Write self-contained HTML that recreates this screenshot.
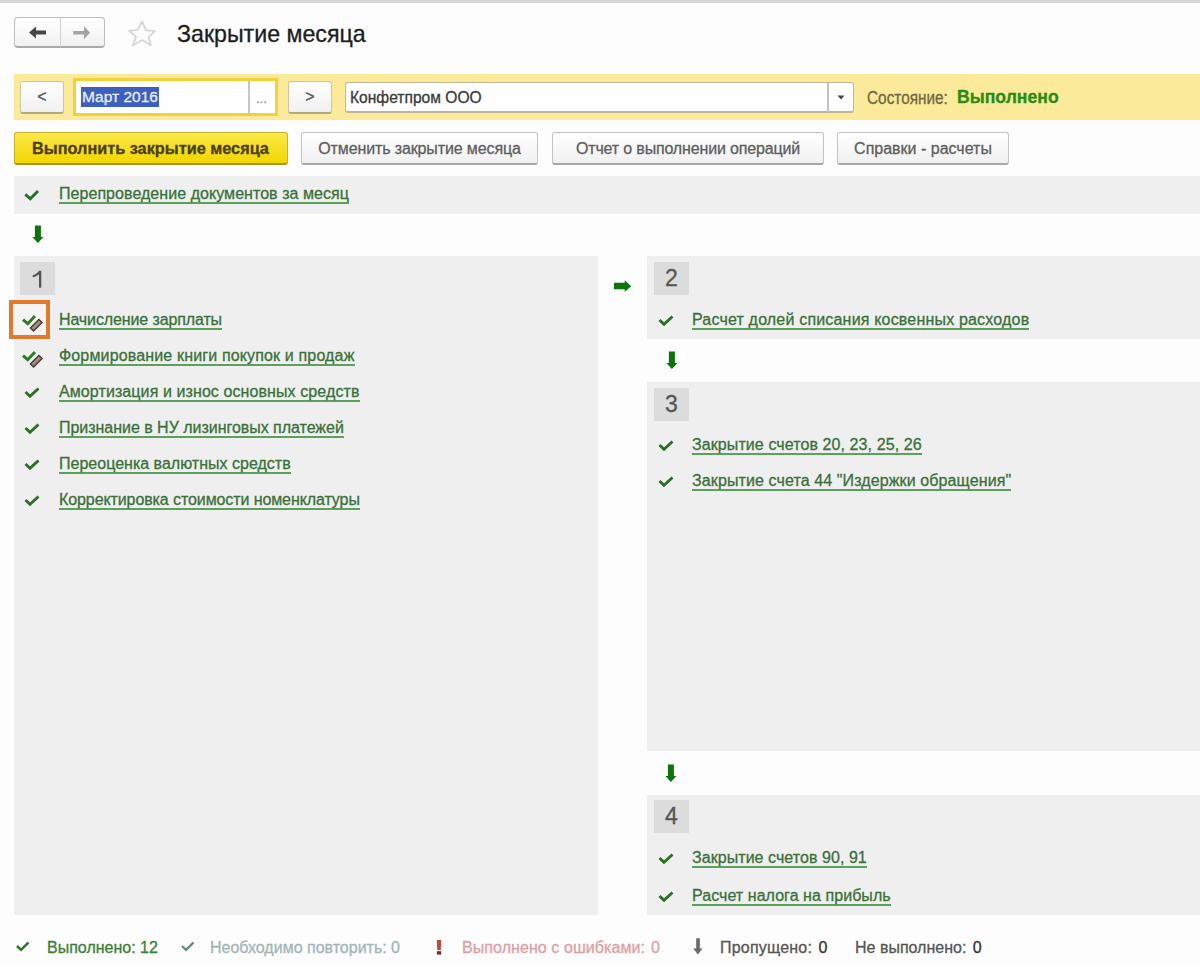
<!DOCTYPE html>
<html><head><meta charset="utf-8">
<style>
*{box-sizing:border-box;margin:0;padding:0}
html,body{width:1200px;height:965px;overflow:hidden;background:#fdfdfd;font-family:"Liberation Sans",sans-serif;position:relative}
body div{-webkit-text-stroke:0.3px currentColor}
.a{position:absolute}
.topline{left:0;top:0;width:1200px;height:3px;background:#d6d6d6}
.navgrp{left:14px;top:17px;width:91px;height:31px;border:1px solid #bdbdbd;border-bottom:2px solid #a9a9a9;border-radius:4px;background:linear-gradient(#ffffff,#f1f1f1)}
.navdiv{left:60px;top:18px;width:1px;height:29px;background:#d0d0d0}
.title{left:177px;top:20px;font-size:23.2px;-webkit-text-stroke:0.3px #1c1c1c;color:#1c1c1c;line-height:28px;white-space:nowrap}
.ypanel{left:14px;top:74px;width:1186px;height:46px;background:#faea9a}
.btn{border:1px solid #c3c3c3;border-bottom:2px solid #a8a8a8;border-radius:3px;background:linear-gradient(#ffffff,#f0f0f0);color:#5e5e5e;font-size:16px;text-align:center;white-space:nowrap}
.sbtn{border-color:#cfc6a0;border-bottom-color:#b2a886}
.field{background:#fff;border:1px solid #bfb897;border-bottom-width:2px;border-radius:3px}
.gp{background:#efefef}
.badge{width:35px;height:33px;background:#dcdcdc;color:#555;font-size:23px;text-align:center;line-height:33px}
.lnk{font-size:16px;color:#3b703b;white-space:nowrap;line-height:18px;height:19px;border-bottom:2px solid #5d9f5d;padding-bottom:0}
.st{font-size:16px;white-space:nowrap;line-height:18px}
svg{position:absolute;overflow:visible}
</style></head><body>
<div class="a topline"></div>

<!-- nav -->
<div class="a navgrp"></div>
<div class="a navdiv"></div>
<svg style="left:28px;top:25px" width="20" height="14" viewBox="0 0 20 14"><path d="M1 7.5 L8 1.5 L8 5.5 L18 5.5 L18 9.5 L8 9.5 L8 13.5 Z" fill="#474747"/></svg>
<svg style="left:72px;top:25px" width="20" height="14" viewBox="0 0 20 14"><path d="M18 7.7 L12 1.3 L12 6 L1.3 6 L1.3 9.4 L12 9.4 L12 14.2 Z" fill="#a3a3a3"/></svg>
<svg style="left:128px;top:20px" width="28" height="28" viewBox="0 0 28 28"><path d="M14.2 1.5 L17.9 10.3 L27 11 L20.6 17.4 L22.9 25.2 L14.2 19.9 L4.9 25.6 L8 16.6 L1 10.9 L9.6 9.9 Z" fill="none" stroke="#d4d4d4" stroke-width="1.7" stroke-linejoin="round"/></svg>
<div class="a title">Закрытие месяца</div>

<!-- yellow panel -->
<div class="a ypanel"></div>
<div class="a btn sbtn" style="left:20px;top:81px;width:44px;height:33px;line-height:30px;font-size:16px;color:#555">&lt;</div>
<div class="a" style="left:73px;top:78px;width:205px;height:38px;border:3px solid #f1d337;background:#fff"></div>
<div class="a" style="left:248px;top:81px;width:2px;height:32px;background:#c6c6c6"></div>
<div class="a" style="left:81px;top:87px;width:78px;height:20px;background:#3d5fbf"></div>
<div class="a st" style="left:82px;top:88px;color:#e8eefc;font-size:15.5px">Март 2016</div>
<div class="a st" style="left:256px;top:90px;color:#999;font-size:13px">...</div>
<div class="a btn sbtn" style="left:288px;top:81px;width:44px;height:33px;line-height:30px;color:#555">&gt;</div>
<div class="a field" style="left:345px;top:82px;width:509px;height:31px"></div>
<div class="a" style="left:827px;top:83px;width:2px;height:29px;background:#c2c2c2"></div>
<svg style="left:837px;top:95px" width="8" height="5" viewBox="0 0 8 5"><path d="M0.5 0.5 L7.5 0.5 L4 4.5 Z" fill="#444"/></svg>
<div class="a st" style="left:350px;top:89px;color:#3a3a3a;font-size:15.6px">Конфетпром ООО</div>
<div class="a st" style="left:867px;top:89px;color:#6f6840;font-size:18.5px;transform:scaleX(0.83);transform-origin:0 0">Состояние:</div>
<div class="a st" style="left:957px;top:88px;color:#2a8c12;font-size:17.6px;font-weight:bold">Выполнено</div>

<!-- buttons -->
<div class="a" style="left:14px;top:132px;width:274px;height:33px;border:1px solid #c9b22a;border-bottom:2px solid #a99420;border-radius:3px;background:linear-gradient(#fbe84a,#f3d600);"></div>
<div class="a st" style="left:32px;top:139px;color:#4a400c;font-weight:bold;font-size:16.3px">Выполнить закрытие месяца</div>
<div class="a btn" style="left:301px;top:132px;width:237px;height:33px;line-height:31px;letter-spacing:-0.12px">Отменить закрытие месяца</div>
<div class="a btn" style="left:552px;top:132px;width:272px;height:33px;line-height:31px;letter-spacing:-0.16px">Отчет о выполнении операций</div>
<div class="a btn" style="left:837px;top:132px;width:172px;height:33px;line-height:31px">Справки - расчеты</div>

<!-- row 1 -->
<div class="a gp" style="left:14px;top:176px;width:1186px;height:38px"></div>
<svg style="left:24px;top:187px" width="16" height="14" viewBox="0 0 16 14"><path d="M1.3 7.3 L6.3 11.8 L14 3.9" fill="none" stroke="#2c6e26" stroke-width="2.9"/></svg>
<div class="a lnk" style="left:59px;top:185px;letter-spacing:0.051px">Перепроведение документов за месяц</div>

<svg style="left:32px;top:225px" width="12" height="19" viewBox="0 0 12 19"><path d="M2.9 0.6 L8.9 0.6 L8.9 11.9 L11.4 11.9 L5.9 18 L0.4 11.9 L2.9 11.9 Z" fill="#0b740c"/></svg>

<!-- panel 1 -->
<div class="a gp" style="left:14px;top:256px;width:584px;height:659px"></div>
<div class="a badge" style="left:20px;top:262px"></div>
<svg style="left:32px;top:270px" width="10" height="18" viewBox="0 0 10 18"><path d="M7 0.7 L9.3 0.7 L9.3 17.8 L7 17.8 L7 4.2 C5.6 5.6 3.6 6.7 0.7 7.3 L0.7 5.2 C3.6 4.4 5.6 2.7 7 0.7 Z" fill="#555"/></svg>
<div class="a" style="left:9px;top:300px;width:41px;height:39px;border:4px solid #e27a2e;background:#f4f4f5"></div>

<!-- panel 2 -->
<svg style="left:614px;top:280px" width="18" height="12" viewBox="0 0 18 12"><path d="M0 2.7 L10.7 2.7 L10.7 0.3 L17.2 6.3 L10.7 11.7 L10.7 9.2 L0 9.2 Z" fill="#0b740c"/></svg>
<div class="a gp" style="left:647px;top:256px;width:553px;height:83px"></div>
<div class="a badge" style="left:654px;top:262px">2</div>

<svg style="left:666px;top:351px" width="12" height="19" viewBox="0 0 12 19"><path d="M2.9 0.6 L8.9 0.6 L8.9 11.9 L11.4 11.9 L5.9 18 L0.4 11.9 L2.9 11.9 Z" fill="#0b740c"/></svg>

<!-- panel 3 -->
<div class="a gp" style="left:647px;top:382px;width:553px;height:369px"></div>
<div class="a badge" style="left:654px;top:388px">3</div>

<svg style="left:665px;top:764px" width="12" height="19" viewBox="0 0 12 19"><path d="M2.9 0.6 L8.9 0.6 L8.9 11.9 L11.4 11.9 L5.9 18 L0.4 11.9 L2.9 11.9 Z" fill="#0b740c"/></svg>

<!-- panel 4 -->
<div class="a gp" style="left:647px;top:795px;width:553px;height:120px"></div>
<div class="a badge" style="left:654px;top:800px">4</div>

<!-- links placeholder -->
<svg style="left:20px;top:312px" width="24" height="21" viewBox="0 0 24 21"><defs><linearGradient id="pg" x1="1" y1="0" x2="0" y2="1"><stop offset="0" stop-color="#5a4638"/><stop offset="1" stop-color="#cfc2b8"/></linearGradient></defs><path d="M3 7.7 L7.7 11.7 L15 4" fill="none" stroke="#2c7d24" stroke-width="3"/><path d="M22.1 10.6 L18.9 7.4 L10.4 15.9 L13.6 19.1 Z" fill="#9c8c82" stroke="#4a3a30" stroke-width="1.4"/></svg>
<div class="a lnk" style="left:59px;top:311px;letter-spacing:-0.118px">Начисление зарплаты</div>
<svg style="left:20px;top:348px" width="24" height="21" viewBox="0 0 24 21"><defs><linearGradient id="pg" x1="1" y1="0" x2="0" y2="1"><stop offset="0" stop-color="#5a4638"/><stop offset="1" stop-color="#cfc2b8"/></linearGradient></defs><path d="M3 7.7 L7.7 11.7 L15 4" fill="none" stroke="#2c7d24" stroke-width="3"/><path d="M22.1 10.6 L18.9 7.4 L10.4 15.9 L13.6 19.1 Z" fill="#9c8c82" stroke="#4a3a30" stroke-width="1.4"/></svg>
<div class="a lnk" style="left:59px;top:347px;letter-spacing:0.151px">Формирование книги покупок и продаж</div>
<svg style="left:24px;top:387px" width="16" height="12" viewBox="0 0 16 12"><path d="M1.5 5 L6 9.3 L14.5 1.5" fill="none" stroke="#2c6e26" stroke-width="2.9"/></svg>
<div class="a lnk" style="left:59px;top:383px;letter-spacing:0.092px">Амортизация и износ основных средств</div>
<svg style="left:24px;top:423px" width="16" height="12" viewBox="0 0 16 12"><path d="M1.5 5 L6 9.3 L14.5 1.5" fill="none" stroke="#2c6e26" stroke-width="2.9"/></svg>
<div class="a lnk" style="left:59px;top:419px;letter-spacing:-0.029px">Признание в НУ лизинговых платежей</div>
<svg style="left:24px;top:459px" width="16" height="12" viewBox="0 0 16 12"><path d="M1.5 5 L6 9.3 L14.5 1.5" fill="none" stroke="#2c6e26" stroke-width="2.9"/></svg>
<div class="a lnk" style="left:59px;top:455px;letter-spacing:0.010px">Переоценка валютных средств</div>
<svg style="left:24px;top:495px" width="16" height="12" viewBox="0 0 16 12"><path d="M1.5 5 L6 9.3 L14.5 1.5" fill="none" stroke="#2c6e26" stroke-width="2.9"/></svg>
<div class="a lnk" style="left:59px;top:491px;letter-spacing:-0.095px">Корректировка стоимости номенклатуры</div>
<svg style="left:658px;top:315px" width="16" height="12" viewBox="0 0 16 12"><path d="M1.5 5 L6 9.3 L14.5 1.5" fill="none" stroke="#2c6e26" stroke-width="2.9"/></svg>
<div class="a lnk" style="left:692px;top:311px;letter-spacing:0.182px">Расчет долей списания косвенных расходов</div>
<svg style="left:658px;top:440px" width="16" height="12" viewBox="0 0 16 12"><path d="M1.5 5 L6 9.3 L14.5 1.5" fill="none" stroke="#2c6e26" stroke-width="2.9"/></svg>
<div class="a lnk" style="left:692px;top:436px;letter-spacing:0.092px">Закрытие счетов 20, 23, 25, 26</div>
<svg style="left:658px;top:476px" width="16" height="12" viewBox="0 0 16 12"><path d="M1.5 5 L6 9.3 L14.5 1.5" fill="none" stroke="#2c6e26" stroke-width="2.9"/></svg>
<div class="a lnk" style="left:692px;top:472px;letter-spacing:0.111px">Закрытие счета 44 &quot;Издержки обращения&quot;</div>
<svg style="left:658px;top:853px" width="16" height="12" viewBox="0 0 16 12"><path d="M1.5 5 L6 9.3 L14.5 1.5" fill="none" stroke="#2c6e26" stroke-width="2.9"/></svg>
<div class="a lnk" style="left:692px;top:849px;letter-spacing:0.056px">Закрытие счетов 90, 91</div>
<svg style="left:658px;top:891px" width="16" height="12" viewBox="0 0 16 12"><path d="M1.5 5 L6 9.3 L14.5 1.5" fill="none" stroke="#2c6e26" stroke-width="2.9"/></svg>
<div class="a lnk" style="left:692px;top:887px;letter-spacing:0.057px">Расчет налога на прибыль</div>

<!-- status bar -->
<svg style="left:16px;top:941px" width="14" height="11" viewBox="0 0 14 11"><path d="M1 5 L5 8.8 L12.5 1.5" fill="none" stroke="#2f7a2a" stroke-width="2.5"/></svg>
<div class="a st" style="left:47px;top:939px;color:#3a7f3a">Выполнено: 12</div>
<svg style="left:181px;top:941px" width="14" height="11" viewBox="0 0 14 11"><path d="M1 5 L5 8.8 L12.5 1.5" fill="none" stroke="#5f8a80" stroke-width="2.3"/></svg>
<div class="a st" style="left:210px;top:939px;color:#a2b6b6">Необходимо повторить: 0</div>
<svg style="left:436px;top:940px" width="6" height="15" viewBox="0 0 6 15"><path d="M0.8 0 L5.2 0 L4.8 10 L1.2 10 Z" fill="#c04a35"/><path d="M0.8 11.2 L5.2 11.2 L5.2 14.6 L0.8 14.6 Z" fill="#7a2a2a"/></svg>
<div class="a st" style="left:462px;top:939px;color:#dfa0a3;letter-spacing:0.07px">Выполнено с ошибками:<span style="margin-left:1.5px"> 0</span></div>
<svg style="left:693px;top:938px" width="10" height="17" viewBox="0 0 10 17"><path d="M3.2 0.3 L6.8 0.3 L6.8 10.5 L9.5 10.5 L4.9 16.5 L0.2 10.5 L3.2 10.5 Z" fill="#6a6a6a"/></svg>
<div class="a st" style="left:720px;top:939px;color:#555;letter-spacing:0.2px">Пропущено:<span style="color:#333;margin-left:2px;letter-spacing:0"> 0</span></div>
<div class="a st" style="left:855px;top:939px;color:#555">Не выполнено:<span style="color:#333;margin-left:2px"> 0</span></div>

</body></html>
